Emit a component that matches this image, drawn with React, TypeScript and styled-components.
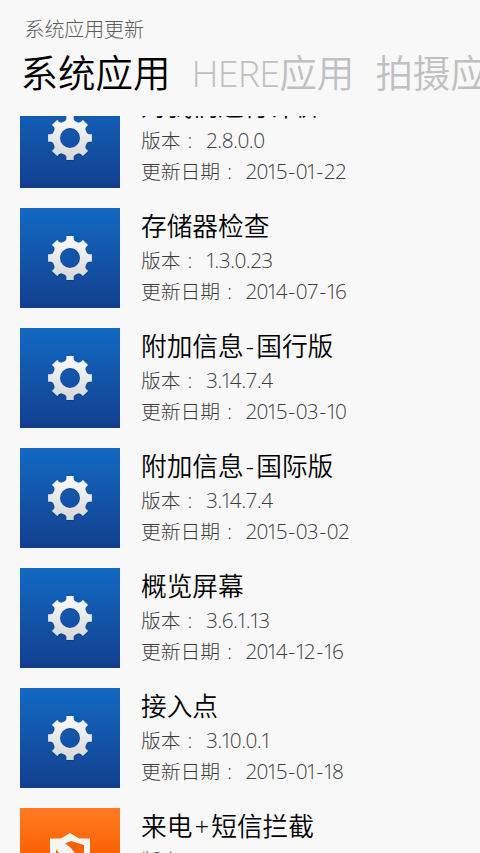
import React from "react";
import styled, { createGlobalStyle } from "styled-components";

const GlobalStyle = createGlobalStyle`
  * { box-sizing: border-box; }
  html, body { margin: 0; padding: 0; background: #f8f8f8; }
  body { overflow: hidden; }
`;

const Screen = styled.main`
  width: 480px;
  height: 853px;
  display: flex;
  flex-direction: column;
  overflow: hidden;
  background: #f8f8f8;
  color: #000;
  font-family: "Open Sans", "Noto Sans CJK SC", sans-serif;
  font-weight: 300;
  white-space: nowrap;
`;

const Header = styled.header`
  flex: none;
  height: 116px;
  padding-top: 16px;
`;

const AppTitle = styled.div`
  height: 27px;
  padding-left: 24.5px;
  font-size: 20px;
  line-height: 28px;
  letter-spacing: -0.1px;
  color: #5c5c5c;
`;

const Pivot = styled.nav`
  display: flex;
  height: 60px;
  padding-left: 20.5px;
  gap: 21px;
`;

const PivotItem = styled.div<{ $active?: boolean }>`
  flex: none;
  display: flex;
  font-size: 37.5px;
  font-weight: 350;
  line-height: 60px;
  color: ${(p) => (p.$active ? "#000" : "#c0c0c0")};
`;

const Latin = styled.span`
  letter-spacing: -0.7px;
`;

const ListView = styled.section`
  flex: 1;
  min-height: 0;
  overflow: hidden;
`;

const List = styled.ul`
  list-style: none;
  margin: -28px 0 0;
  padding: 0 0 0 20px;
`;

const Row = styled.li`
  display: flex;
  gap: 21px;
  height: 120px;
`;

const Tile = styled.div<{ $kind: Kind }>`
  flex: none;
  width: 100px;
  height: 100px;
  background: ${(p) =>
    p.$kind === "gear"
      ? "linear-gradient(#126ac4, #123f8e)"
      : "linear-gradient(#ff7a22, #fb6000 50%, #f55a00)"};
  svg { display: block; }
`;

const Details = styled.div`
  display: flex;
  flex-direction: column;
  padding-top: 1px;
`;

const Name = styled.div`
  height: 36px;
  font-size: 25.7px;
  font-weight: 350;
  line-height: 36px;
`;

const Sign = styled.span`
  margin: 0 2.1px;
`;

const Meta = styled.div`
  display: flex;
  height: 31px;
  font-size: 19.8px;
  line-height: 31px;
  color: #3c3c3c;
`;

const Colon = styled.span`
  width: 25.4px;
  padding-left: 7px;
`;

const Value = styled.span`
  font-size: 20.8px;
  letter-spacing: -0.8px;
`;

const One = styled.span`
  margin: 0 -1.9px 0 -1.1px;
`;

const Dash = styled.span`
  margin: 0 1.5px;
`;

const Dot = styled.span`
  margin: 0 0.25px;
`;

type Kind = "gear" | "shield";
interface Entry {
  name: string;
  version: string;
  date: string;
  kind: Kind;
}

const entries: Entry[] = [
  { name: "对我们进行评价", version: "2.8.0.0", date: "2015-01-22", kind: "gear" },
  { name: "存储器检查", version: "1.3.0.23", date: "2014-07-16", kind: "gear" },
  { name: "附加信息-国行版", version: "3.14.7.4", date: "2015-03-10", kind: "gear" },
  { name: "附加信息-国际版", version: "3.14.7.4", date: "2015-03-02", kind: "gear" },
  { name: "概览屏幕", version: "3.6.1.13", date: "2014-12-16", kind: "gear" },
  { name: "接入点", version: "3.10.0.1", date: "2015-01-18", kind: "gear" },
  { name: "来电+短信拦截", version: "1.9.2.1", date: "2015-01-18", kind: "shield" },
];

const Label = ({ text }: { text: string }) => (
  <Name>
    {text.split(/([-+])/).map((part, i) =>
      part === "-" || part === "+" ? <Sign key={i}>{part}</Sign> : part
    )}
  </Name>
);

const Numerals = ({ text }: { text: string }) => (
  <Value>
    {text.split(/([-.1])/).map((part, i) => {
      if (part === "1") return <One key={i}>1</One>;
      if (part === "-") return <Dash key={i}>-</Dash>;
      if (part === ".") return <Dot key={i}>.</Dot>;
      return part;
    })}
  </Value>
);

const gearTeeth = [0, 45, 90, 135, 180, 225, 270, 315];

const gearOutline = gearTeeth
  .map((deg) => {
    const t = (deg * Math.PI) / 180;
    const at = (r: number, off: number) =>
      `${(50 + r * Math.sin(t + off)).toFixed(2)} ${(50 - r * Math.cos(t + off)).toFixed(2)}`;
    return `${at(17.6, -0.27)} L${at(19.2, -0.19)} L${at(22.2, -0.165)} L${at(22.2, 0.165)} L${at(19.2, 0.19)} L${at(17.6, 0.27)}`;
  })
  .join(" L");

const GearShape = ({ fill }: { fill: string }) => (
  <path
    fillRule="evenodd"
    fill={fill}
    d={`M${gearOutline}Z M60 50 A10 10 0 1 0 40 50 A10 10 0 1 0 60 50Z`}
  />
);

const Gear = ({ id }: { id: string }) => (
  <svg width="100" height="100" viewBox="0 0 100 100">
    <defs>
      <linearGradient id={id} gradientUnits="userSpaceOnUse" x1="0" y1="28" x2="0" y2="72">
        <stop offset="0" stopColor="#fbfbfb" />
        <stop offset="1" stopColor="#d6d7da" />
      </linearGradient>
    </defs>
    <g transform="translate(0 1)" opacity="0.45">
      <GearShape fill="#0b2f70" />
    </g>
    <GearShape fill={`url(#${id})`} />
  </svg>
);

const Shield = () => (
  <svg width="100" height="100" viewBox="0 0 100 100">
    <path d="M30 30.500 H41 L50 25 L59 30.500 H70 V54 Q67 69 50 77 Q33 69 30 54Z" fill="#f7f5f3" />
    <path d="M45 35.500 L51 33 L64 37 V54 L55 45 L50 39Z M36 41.500 L48 54 H36Z" fill="#f46208" />
  </svg>
);

export default function App() {
  return (
    <>
      <GlobalStyle />
      <Screen>
        <Header>
          <AppTitle>系统应用更新</AppTitle>
          <Pivot>
            <PivotItem $active>系统应用</PivotItem>
            <PivotItem>
              <Latin>HERE</Latin>应用
            </PivotItem>
            <PivotItem>拍摄应用</PivotItem>
          </Pivot>
        </Header>
        <ListView>
          <List>
            {entries.map((e, i) => (
              <Row key={e.name}>
                <Tile $kind={e.kind}>{e.kind === "gear" ? <Gear id={`gear${i}`} /> : <Shield />}</Tile>
                <Details>
                  <Label text={e.name} />
                  <Meta>
                    版本<Colon>:</Colon>
                    <Numerals text={e.version} />
                  </Meta>
                  <Meta>
                    更新日期<Colon>:</Colon>
                    <Numerals text={e.date} />
                  </Meta>
                </Details>
              </Row>
            ))}
          </List>
        </ListView>
      </Screen>
    </>
  );
}
